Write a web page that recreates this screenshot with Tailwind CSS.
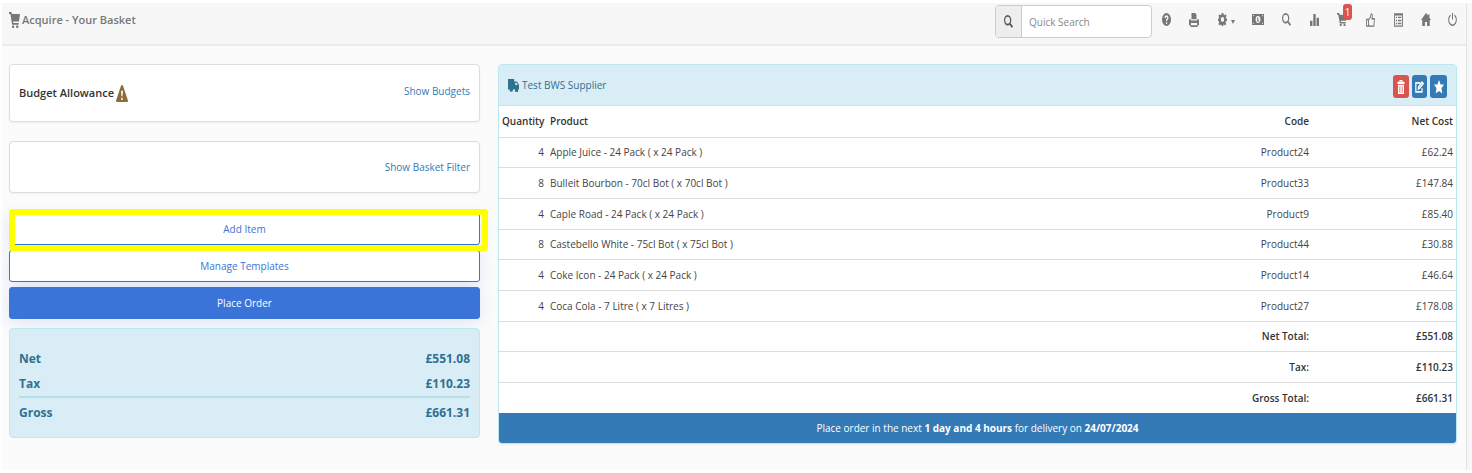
<!DOCTYPE html>
<html lang="en">
<head>
<meta charset="utf-8">
<title>Acquire - Your Basket</title>
<script src="https://cdn.jsdelivr.net/npm/@tailwindcss/browser@4"></script>
</head>
<body class="min-h-screen bg-white pt-[3px] pl-[2px] pb-[3px] flex font-['Open_Sans','Noto_Sans',sans-serif] text-[10px] leading-4 text-[#444]">
<svg class="hidden" aria-hidden="true">
  <symbol id="cart" viewBox="0 0 16 16" preserveAspectRatio="none"><path d="M0 0h3.500l.8 2H16l-1.500 7.500H6l.3 1.500H14v1.800H4.500L2 2H0zM4.500 13.500h3V16h-3zM10.500 13.500h3V16h-3z"/></symbol>
  <symbol id="search" viewBox="0 0 16 16" preserveAspectRatio="none"><path fill-rule="evenodd" d="M6.500 0a6.500 6.500 0 1 1 0 13 6.500 6.500 0 0 1 0-13zm0 2.200a4.300 4.300 0 1 0 0 8.600 4.300 4.300 0 0 0 0-8.600zM10 12l2-2 4 4-2 2z"/></symbol>
  <symbol id="trash" viewBox="0 0 16 16" preserveAspectRatio="none"><path fill-rule="evenodd" d="M5 2V0h6v2h4v2.500H1V2zm1.500-.700V2h3v-.700zM2 5.500h12V16H2zM4.500 7v7.500h1V7zm3 0v7.500h1V7zm3 0v7.500h1V7z"/></symbol>
</svg>

<div class="flex-1 bg-[#fbfbfb] border-r border-[#e3e3e3]">
  <header class="h-[43px] flex items-start bg-[#f7f7f7] border-b-2 border-[#ececec] text-[#777]">
    <h1 class="flex-1 flex items-center gap-[2px] pl-[7px] pt-[7px] text-[11px] leading-5 font-semibold">
      <svg class="w-[11px] h-4 fill-current"><use href="#cart"/></svg>Acquire - Your Basket
    </h1>
    <form class="mt-[2px] flex w-[157px] h-[33px] rounded border border-[#ccc] bg-white overflow-hidden">
      <label for="q" class="w-[26px] shrink-0 flex items-center justify-center bg-[#eee] border-r border-[#ccc] text-[#555]" aria-label="Quick Search">
        <svg class="w-[9px] h-[13px] fill-current"><use href="#search"/></svg>
      </label>
      <input id="q" type="text" placeholder="Quick Search" class="min-w-0 flex-1 pl-[7px] text-[10px] outline-none placeholder:text-[#888]">
    </form>
    <nav class="flex h-[33px] items-center" aria-label="Tools">
      <button class="w-7 h-6 flex items-center justify-center" aria-label="Help"><svg class="w-[9px] h-[13px]" viewBox="0 0 16 16" preserveAspectRatio="none"><circle cx="8" cy="8" r="8" fill="currentColor"/><path d="M4.500 6C4.500 1.800 11.500 1.800 11.500 6c0 2-2.500 2-2.500 4H7c0-3 2.300-3 2.300-4.200S6.700 4.700 6.700 6zM7 11.500h2.200v2H7z" fill="#f7f7f7"/></svg></button>
      <button class="w-7 h-6 flex items-center justify-center" aria-label="Print"><svg class="w-[10px] h-[14px] fill-current" viewBox="0 0 16 16" preserveAspectRatio="none"><path fill-rule="evenodd" d="M4 0h6l2 2v5H4zM1 7h2v1.500h10V7h2l1 1v6h-16V8zM3 11.500v2.500h10v-2.500zM2 14h12l-.5 2h-11z"/></svg></button>
      <button class="w-9 h-6 flex items-center justify-center gap-1" aria-label="Settings"><svg class="w-[9px] h-[13px] fill-current" viewBox="0 0 16 16" preserveAspectRatio="none"><path fill-rule="evenodd" d="M6.500 0h3l.5 2.300 1.200.5 2-1.300 2 2-1.300 2 .5 1.200L16 7v2.700l-2.200.5-.5 1.200 1.300 2-2 2-2-1.300-1.200.5L9.500 16h-3L6 14.600l-1.200-.5-2 1.300-2-2 1.300-2-.5-1.200L0 9.700V7l1.600-.3.500-1.200-1.300-2 2-2 2 1.300L6 2.300zM8 5a3 3 0 1 0 0 6 3 3 0 0 0 0-6z"/></svg><svg class="w-1 h-1 mt-1 fill-current" viewBox="0 0 8 4" preserveAspectRatio="none"><path d="M0 0h8L4 4z"/></svg></button>
      <button class="w-7 h-6 flex items-center justify-center" aria-label="Money"><svg class="w-3 h-[11px]" viewBox="0 0 16 12" preserveAspectRatio="none"><path fill="currentColor" d="M0 0h16v12H0z"/><ellipse cx="8" cy="6" rx="3.200" ry="3.800" fill="#f7f7f7"/><path fill="#f7f7f7" d="M1.300 1.200h1.500L1.300 3zM14.700 1.200h-1.500L14.700 3zM1.300 10.800h1.500L1.300 9zM14.700 10.800h-1.500L14.700 9z"/><path fill="currentColor" d="M6.500 4h2v3h1v1.300H6.500V7h.7V5h-.7z"/></svg></button>
      <button class="w-7 h-6 flex items-center justify-center" aria-label="Search"><svg class="w-[9px] h-[13px] fill-current"><use href="#search"/></svg></button>
      <button class="w-7 h-6 flex items-center justify-center" aria-label="Reports"><svg class="w-[9px] h-3 fill-current" viewBox="0 0 16 16" preserveAspectRatio="none"><path d="M0 9h4.300v7H0zM5.800 0h4.300v16H5.800zM11.700 5H16v11h-4.300z"/></svg></button>
      <button class="relative w-7 h-6 flex items-center justify-center" aria-label="Basket, 1 item"><svg class="w-[10px] h-[13px] fill-current"><use href="#cart"/></svg><span class="absolute left-[15px] -top-1 w-[9px] h-4 rounded-[3px] bg-[#d9534f] text-white text-[10px] leading-4 text-center">1</span></button>
      <button class="w-7 h-6 flex items-center justify-center" aria-label="Approve"><svg class="w-[9px] h-[14px]" viewBox="0 0 16 16" preserveAspectRatio="none" fill="none" stroke="currentColor" stroke-width="1.600"><path d="M1 7.500h3.500V15H1zM4.500 8 8 4.500 9 1c3 0 2.500 3 1.500 5.500H15L14 15H6.500l-2-1.500"/></svg></button>
      <button class="w-7 h-6 flex items-center justify-center" aria-label="List"><svg class="w-[9px] h-[14px]" viewBox="0 0 16 16" preserveAspectRatio="none" fill="none" stroke="currentColor" stroke-width="1.700"><path d="M1 1h14v14H1zM1 2h14M3.500 5h2M7 5h6M3.500 8.500h2M7 8.500h6M3.500 12h2M7 12h6"/></svg></button>
      <button class="w-[27px] h-6 flex items-center justify-center" aria-label="Home"><svg class="w-[10px] h-[13px] fill-current" viewBox="0 0 16 16" preserveAspectRatio="none"><path d="M8 0l3.500 3.500V1.500h2v4L16 8.500h-2V16H9.700v-5H6.300v5H2V8.500H0z"/></svg></button>
      <button class="w-[27px] h-6 flex items-center justify-center" aria-label="Log out"><svg class="w-[9px] h-[13px]" viewBox="0 0 16 16" preserveAspectRatio="none" fill="none" stroke="currentColor" stroke-width="1.800"><path d="M8 0v8M4.500 2.500a6.800 6.800 0 1 0 7 0"/></svg></button>
    </nav>
  </header>

  <main class="grid grid-cols-[471fr_959fr] gap-[18px] items-start pt-[18px] pl-[7px] pr-[9px]">
    <div>
      <section class="h-[58px] flex items-center justify-between px-[9px] bg-white border border-[#ddd] rounded shadow-xs">
        <h2 class="flex items-center gap-[2px] text-[11px] leading-5 font-semibold text-[#333]">Budget Allowance
          <svg class="w-3 h-[17px]" viewBox="0 0 16 16" preserveAspectRatio="none"><path fill="#8a6d3b" d="M8 0q.9 0 1.300.8L15.700 14q.8 2-1 2H1.300q-1.800 0-1-2L6.700.8Q7.100 0 8 0z"/><path fill="#fff" d="M6.700 5.500h2.600l-.6 5H7.300zM7 12h2v2H7z"/></svg>
        </h2>
        <a href="#" class="pb-[5px] text-[#337ab7]">Show Budgets</a>
      </section>
      <section class="mt-[19px] h-[52px] flex items-center justify-end px-[9px] bg-white border border-[#ddd] rounded shadow-xs">
        <a href="#" class="text-[#337ab7]">Show Basket Filter</a>
      </section>
      <div class="relative mt-5 flex flex-col gap-[5px] text-[#3a74d8]">
        <button class="h-8 bg-white border border-[#3a74d8] rounded-[3px] shadow-[0_4px_16px_rgba(58,116,216,0.15)]">Add Item</button>
        <button class="h-8 bg-white border border-[#3a74d8] rounded-[3px] shadow-[0_4px_16px_rgba(58,116,216,0.15)]">Manage Templates</button>
        <button class="h-8 bg-[#3a74d8] border border-[#3a74d8] rounded-[3px] text-white shadow-[0_4px_16px_rgba(58,116,216,0.15)]">Place Order</button>
        <div class="absolute left-0 -right-2 -top-1 h-[42px] border-[6px] border-[#ff0] rounded-[3px] pointer-events-none"></div>
      </div>
      <dl class="relative mt-[9px] px-[9px] pt-[17px] pb-3 bg-[#d9edf7] border border-[#bce8f1] rounded text-[12px] leading-[25px] font-bold text-[#31708f]">
        <div class="flex justify-between"><dt>Net</dt><dd>£551.08</dd></div>
        <div class="flex justify-between"><dt>Tax</dt><dd>£110.23</dd></div>
        <div class="flex justify-between border-t-2 border-[#b5e0e8] pt-[2px]"><dt>Gross</dt><dd>£661.31</dd></div>
      </dl>
    </div>

    <section class="bg-white border border-[#bce8f1] rounded overflow-hidden shadow-xs">
      <div class="h-[41px] flex items-center justify-between pl-[9px] pr-[9px] bg-[#d9edf7] border-b border-[#bce8f1] text-[#31708f]">
        <h2 class="flex items-center gap-[3px]">
          <svg class="w-[11px] h-[14px] fill-current" viewBox="0 0 16 16" preserveAspectRatio="none"><path fill-rule="evenodd" d="M0 1h9v3h4l3 4v5h-1.500a2.300 2.300 0 1 1-4 0H7a2.300 2.300 0 1 1-4.500 0H0zm10.500 4.500V8H14l-1.800-2.500z"/></svg>Test BWS Supplier
        </h2>
        <div class="flex gap-[3px] pt-[3px] text-white">
          <button class="w-4 h-[23px] flex items-center justify-center rounded-[3px] bg-[#d9534f]" aria-label="Delete"><svg class="w-2 h-[14px] fill-current"><use href="#trash"/></svg></button>
          <button class="w-[15px] h-[23px] flex items-center justify-center rounded-[3px] bg-[#337ab7]" aria-label="Edit"><svg class="w-[9px] h-3" viewBox="0 0 16 16" preserveAspectRatio="none" fill="none" stroke="currentColor" stroke-width="2.200"><path d="M9.500 2.500H1.500v12h11V9.500M6 10.500l.5-3L12.500 1.500l2 2-6 6z"/></svg></button>
          <button class="w-[17px] h-[23px] flex items-center justify-center rounded-[3px] bg-[#337ab7]" aria-label="Favourite"><svg class="w-[10px] h-[14px] fill-current" viewBox="0 0 16 16" preserveAspectRatio="none"><path d="M8 0l2.500 5H16l-4 4.500 1.300 6L8 12.500l-5.300 3 1.300-6L0 5h5.500z"/></svg></button>
        </div>
      </div>
      <table class="w-full table-fixed border-collapse [&_th]:px-[3px] [&_td]:px-[3px] text-right">
        <colgroup><col class="w-12"><col><col class="w-[200px]"><col class="w-36"></colgroup>
        <thead class="text-[#333]"><tr class="h-[31px] [&>th]:font-semibold"><th class="whitespace-nowrap">Quantity</th><th class="text-left">Product</th><th>Code</th><th>Net Cost</th></tr></thead>
        <tbody class="[&>tr]:h-[31px] [&>tr:nth-child(3n+1)]:h-[30px] [&>tr]:border-t [&>tr]:border-[#ddd]">
          <tr><td>4</td><td class="text-left">Apple Juice - 24 Pack ( x 24 Pack )</td><td>Product24</td><td>£62.24</td></tr>
          <tr><td>8</td><td class="text-left">Bulleit Bourbon - 70cl Bot ( x 70cl Bot )</td><td>Product33</td><td>£147.84</td></tr>
          <tr><td>4</td><td class="text-left">Caple Road - 24 Pack ( x 24 Pack )</td><td>Product9</td><td>£85.40</td></tr>
          <tr><td>8</td><td class="text-left">Castebello White - 75cl Bot ( x 75cl Bot )</td><td>Product44</td><td>£30.88</td></tr>
          <tr><td>4</td><td class="text-left">Coke Icon - 24 Pack ( x 24 Pack )</td><td>Product14</td><td>£46.64</td></tr>
          <tr><td>4</td><td class="text-left">Coca Cola - 7 Litre ( x 7 Litres )</td><td>Product27</td><td>£178.08</td></tr>
        </tbody>
        <tfoot class="text-[#333] [&_th]:font-semibold [&_td]:font-semibold [&>tr]:h-[31px] [&>tr:first-child]:h-[30px] [&>tr]:border-t [&>tr]:border-[#ddd]">
          <tr><th colspan="3">Net Total:</th><td>£551.08</td></tr>
          <tr><th colspan="3">Tax:</th><td>£110.23</td></tr>
          <tr><th colspan="3">Gross Total:</th><td>£661.31</td></tr>
        </tfoot>
      </table>
      <p class="h-[30px] flex items-center justify-center bg-[#337ab7] text-white"><span>Place order in the next <b>1 day and 4 hours</b> for delivery on <b>24/07/2024</b></span></p>
    </section>
  </main>
</div>
<div class="w-[5px] bg-[#f7f7f7]"></div>
</body>
</html>
